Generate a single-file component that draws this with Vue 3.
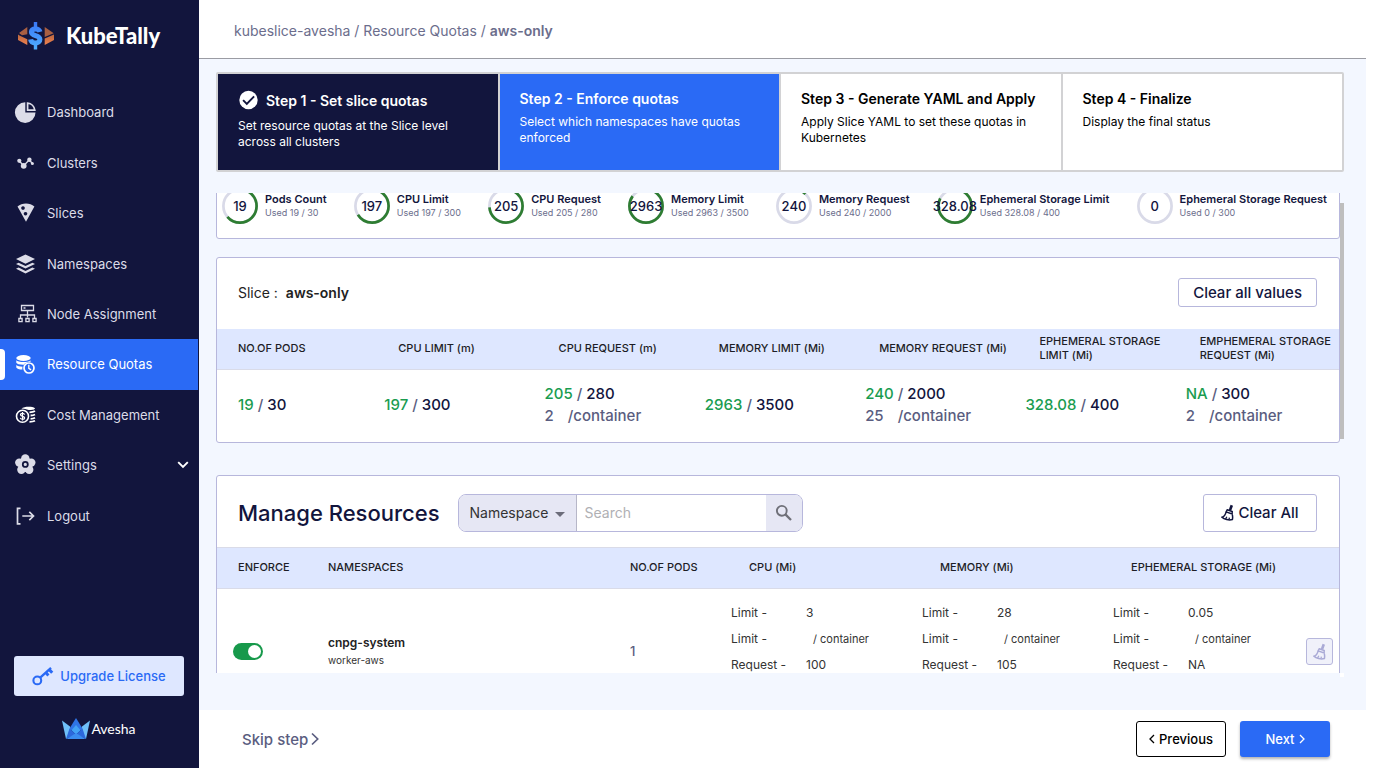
<script setup>
import { ref, onMounted } from 'vue'

const navItems = [
  { label: 'Dashboard', icon: 'dashboard' },
  { label: 'Clusters', icon: 'clusters' },
  { label: 'Slices', icon: 'slices' },
  { label: 'Namespaces', icon: 'namespaces' },
  { label: 'Node Assignment', icon: 'nodes' },
  { label: 'Resource Quotas', icon: 'quotas', active: true },
  { label: 'Cost Management', icon: 'cost' },
  { label: 'Settings', icon: 'settings', expandable: true },
  { label: 'Logout', icon: 'logout' },
]

const steps = [
  { title: 'Step 1 - Set slice quotas', text: 'Set resource quotas at the Slice level across all clusters', state: 'done' },
  { title: 'Step 2 - Enforce quotas', text: 'Select which namespaces have quotas enforced', state: 'current' },
  { title: 'Step 3 - Generate YAML and Apply', text: 'Apply Slice YAML to set these quotas in Kubernetes', state: 'todo' },
  { title: 'Step 4 - Finalize', text: 'Display the final status', state: 'todo' },
]

const usage = [
  { name: 'Pods Count', used: 19, total: 30 },
  { name: 'CPU Limit', used: 197, total: 300 },
  { name: 'CPU Request', used: 205, total: 280 },
  { name: 'Memory Limit', used: 2963, total: 3500 },
  { name: 'Memory Request', used: 240, total: 2000 },
  { name: 'Ephemeral Storage Limit', used: 328.08, total: 400 },
  { name: 'Ephemeral Storage Request', used: 0, total: 300 },
]
const radius = 16.6
const circumference = 2 * Math.PI * radius
const dash = (u) => `${(u.used / u.total) * circumference} ${circumference}`

const quotas = [
  { head: 'NO.OF PODS', used: '19', total: '30' },
  { head: 'CPU LIMIT (m)', used: '197', total: '300' },
  { head: 'CPU REQUEST (m)', used: '205', total: '280', per: '2' },
  { head: 'MEMORY LIMIT (Mi)', used: '2963', total: '3500' },
  { head: 'MEMORY REQUEST (Mi)', used: '240', total: '2000', per: '25' },
  { head: 'EPHEMERAL STORAGE LIMIT (Mi)', used: '328.08', total: '400' },
  { head: 'EMPHEMERAL STORAGE REQUEST (Mi)', used: 'NA', total: '300', per: '2' },
]

const rows = ref([
  {
    enforce: true,
    name: 'cnpg-system',
    worker: 'worker-aws',
    pods: 1,
    resources: [
      { limit: '3', request: '100' },
      { limit: '28', request: '105' },
      { limit: '0.05', request: 'NA' },
    ],
  },
])

const filterBy = ref('Namespace')
const search = ref('')
const scroller = ref(null)
onMounted(() => {
  scroller.value.scrollTop = 20
})
</script>

<template>
  <div class="app">
    <aside class="sidebar">
      <div class="brand">
        <svg width="38" height="28" viewBox="0 0 38 28" aria-hidden="true">
          <defs>
            <linearGradient id="copper" x1="0" y1="0" x2="0" y2="1">
              <stop offset="0" stop-color="#b8663f" />
              <stop offset="1" stop-color="#f08250" />
            </linearGradient>
            <linearGradient id="dollar" x1="0" y1="0" x2="0" y2="28" gradientUnits="userSpaceOnUse">
              <stop offset="0" stop-color="#3a78f6" />
              <stop offset="1" stop-color="#4fb0ff" />
            </linearGradient>
          </defs>
          <path d="M2 10.900L10.300 5v7.200L5 13.300zM27.700 5l9 6.200-9 3.700z" fill="#a85f42" />
          <path d="M1 12.600l1.500 1 7.800 3.700V23L1 18zM27.700 16.600L37 12.400V18l-9.300 5z" fill="url(#copper)" />
          <path d="M23 9.800C22.400 7.600 20.600 6.900 18.500 6.900c-2.600 0-4.100 1.200-4.100 3.200 0 4.600 8.500 2.500 8.500 7.300 0 2.300-1.900 3.500-4.400 3.500-2.600 0-4.500-1.200-4.900-3.600" fill="none" stroke="url(#dollar)" stroke-width="5" />
          <path d="M18.500 0v5M18.500 22.500v5" stroke="url(#dollar)" stroke-width="3.400" />
        </svg>
        <span>KubeTally</span>
      </div>

      <nav class="nav">
        <a v-for="item in navItems" :key="item.label" href="#" class="nav-item" :class="{ active: item.active }">
          <svg class="nav-icon" width="24" height="24" viewBox="0 0 24 24" aria-hidden="true">
            <g v-if="item.icon === 'dashboard'">
              <path d="M11.300 2.300v10.200h10.200A10.300 10.300 0 1 1 11.300 2.300z" fill="currentColor" />
              <path d="M13.600 3.200v6.900h7.200A8 8 0 0 0 13.600 3.200z" fill="none" stroke="currentColor" stroke-width="1.700" />
            </g>
            <g v-else-if="item.icon === 'clusters'" fill="currentColor">
              <path d="M5.500 10.200l4.200 4.600 5.600-6 3 3.700" fill="none" stroke="currentColor" stroke-width="1.300" />
              <circle cx="5.300" cy="9.800" r="2.100" /><circle cx="9.700" cy="14.800" r="2.900" />
              <circle cx="15.400" cy="8.700" r="2.200" /><circle cx="18.400" cy="12.600" r="1.500" />
            </g>
            <path v-else-if="item.icon === 'slices'" fill="currentColor" fill-rule="evenodd" d="M3.500 5.600C8 1.300 16 1.300 20.400 5.600L12 20.800zM9 5.200a1.800 1.800 0 1 0 .01 0zM11.500 10.900a1.800 1.800 0 1 0 .01 0z" />
            <g v-else-if="item.icon === 'namespaces'" fill="currentColor">
              <path d="M11.500 2.500L21 7.100l-9.500 4.600L2 7.100z" />
              <path d="M2 11.900l2.600-1.200 6.900 3.300 6.900-3.300 2.600 1.200-9.500 4.700z" />
              <path d="M2 16.800l2.600-1.200 6.900 3.300 6.900-3.300 2.600 1.200-9.500 4.700z" />
            </g>
            <g v-else-if="item.icon === 'nodes'" fill="none" stroke="currentColor" stroke-width="1.300">
              <path d="M7.500 3.500h12v5h-12zM9.500 6h2M13.500 8.500v7M6.500 16v-3h14v3" />
              <path d="M4.900 16.500h3.200v3.200H4.900zM11.900 16.500h3.200v3.200h-3.200zM18.900 16.500h3.200v3.200h-3.200z" />
            </g>
            <g v-else-if="item.icon === 'quotas'" fill="currentColor">
              <ellipse cx="9.500" cy="6" rx="7.200" ry="3" />
              <path d="M2.300 8.200c1.500 2 11 2.600 14.300.2v1.300c-3 0-5.600 1.400-6.900 3-3.600.1-7-.7-7.400-2zM2.300 13c1 1 3.600 1.600 6.300 1.700-.3.900-.4 1.800-.2 2.900C5.300 17.500 2.600 16.700 2.300 15.500z" />
              <circle cx="15" cy="16" r="5" fill="none" stroke="currentColor" stroke-width="1.700" />
              <path d="M14.800 12.800v3.500l2.300 1.600" fill="none" stroke="currentColor" stroke-width="1.300" />
            </g>
            <g v-else-if="item.icon === 'cost'" fill="none" stroke="#fff">
              <path d="M7.500 5.400C10 3.600 18 3.200 21 5.200c0 1.200-3 1.900-6.300 1.900-2.500-1.300-4.500-1.600-7.200-1.700z" fill="#fff" stroke="none" />
              <path d="M15.500 9.300c2.300 0 4.300-.4 5.500-1.200M16.600 12.500c1.800-.1 3.400-.5 4.400-1.100M16.600 15.800c1.800-.1 3.400-.5 4.400-1.100M15.500 18.800c2.300 0 4.400-.4 5.500-1" stroke-width="1.800" />
              <circle cx="8.500" cy="13.300" r="6" stroke-width="1.600" />
              <path d="M10.700 11.600c-.4-1-1.200-1.300-2.200-1.300-2.700 0-2.800 2.500 0 3 2.900.5 2.800 3 0 3-1.200 0-2-.5-2.300-1.400M8.500 9v8.600" stroke-width="1.200" />
            </g>
            <g v-else-if="item.icon === 'settings'" fill="currentColor">
              <circle cx="11.300" cy="5.400" r="4.200" /><circle cx="17.300" cy="9.600" r="4.200" />
              <circle cx="15.200" cy="16.700" r="4.200" /><circle cx="7.400" cy="16.700" r="4.200" />
              <circle cx="5.300" cy="9.600" r="4.200" /><circle cx="11.300" cy="11.600" r="7.400" />
              <circle cx="11.300" cy="11.400" r="2.500" fill="none" stroke="#12153d" stroke-width="1.800" />
            </g>
            <g v-else fill="none" stroke="currentColor" stroke-width="1.700">
              <path d="M6.500 4.300h-3v15.500h3M8.300 12h11M15.300 7.800l4.200 4.200-4.200 4.200" />
            </g>
          </svg>
          <span class="nav-label">{{ item.label }}</span>
          <svg v-if="item.expandable" class="chevron" width="12" height="8" viewBox="0 0 12 8" aria-hidden="true">
            <path d="M1.200 1.200L6 6l4.800-4.800" fill="none" stroke="#fff" stroke-width="1.900" />
          </svg>
        </a>
      </nav>

      <div class="sidebar-foot">
        <button class="upgrade" type="button">
          <svg width="22" height="20" viewBox="0 0 22 20" aria-hidden="true">
            <g fill="none" stroke="#2a6af5">
              <circle cx="5.300" cy="14.400" r="3.900" stroke-width="2.100" />
              <path d="M8.200 11.600L19 1.800" stroke-width="2.300" />
              <path d="M13.800 6.600l2.600 2.800M17.200 3.600l3 3.200" stroke-width="3" />
            </g>
          </svg>
          Upgrade License
        </button>
        <div class="maker">
          <svg width="28" height="22" viewBox="0 0 28 22" aria-hidden="true">
            <path d="M0 2.500l8 6L9.500 15 4 21z" fill="#6fc0fa" />
            <path d="M28 2.500l-8 6L18.500 15l5.500 6z" fill="#6fc0fa" />
            <path d="M14 0l6.500 10.500L14 16.500 7.500 10.500z" fill="#2f74e6" />
            <path d="M14 7l4.500 5.300L14 16.500l-4.500-4.200z" fill="#42a2f6" />
            <path d="M7.500 10.500l6.500 6L4 21zM20.500 10.500l-6.500 6L24 21z" fill="#2c68dc" />
            <path d="M14 15l9.500 6h-19z" fill="#3a8cf0" />
          </svg>
          <span>Avesha</span>
        </div>
      </div>
    </aside>

    <main class="main">
      <header class="topbar">
        <div class="crumbs"><a href="#">kubeslice-avesha</a> / <a href="#">Resource Quotas</a> / <strong>aws-only</strong></div>
      </header>

      <ol class="steps">
        <li v-for="step in steps" :key="step.title" class="step" :class="step.state">
          <div class="step-title">
            <svg v-if="step.state === 'done'" width="20" height="20" viewBox="0 0 20 20" aria-hidden="true">
              <circle cx="10.500" cy="10" r="9.200" fill="#fff" />
              <path d="M5.100 10.200l3.700 3.700 7.300-7.600" fill="none" stroke="#12153d" stroke-width="1.900" />
            </svg>
            {{ step.title }}
          </div>
          <p>{{ step.text }}</p>
        </li>
      </ol>

      <div class="viewport">
        <div ref="scroller" class="scroller">
          <section class="card usage">
            <div v-for="u in usage" :key="u.name" class="usage-item">
              <div class="ring">
                <svg width="36" height="36" viewBox="0 0 36 36" aria-hidden="true">
                  <circle cx="18" cy="18" :r="radius" fill="none" stroke="#d9dae8" stroke-width="2.700" />
                  <circle v-if="u.used" cx="18" cy="18" :r="radius" fill="none" stroke="#2e7d32" stroke-width="2.700" :stroke-dasharray="dash(u)" transform="rotate(-90 18 18)" />
                </svg>
                <span>{{ u.used }}</span>
              </div>
              <div class="usage-text">
                <div class="usage-name">{{ u.name }}</div>
                <div class="usage-used">Used {{ u.used }} / {{ u.total }}</div>
              </div>
            </div>
          </section>

          <section class="card slice">
            <div class="card-head">
              <div class="slice-name">Slice : <strong>aws-only</strong></div>
              <button type="button" class="outline clear-values">Clear all values</button>
            </div>
            <table class="quota-table">
              <thead>
                <tr><th v-for="q in quotas" :key="q.head" scope="col">{{ q.head }}</th></tr>
              </thead>
              <tbody>
                <tr>
                  <td v-for="q in quotas" :key="q.head">
                    <div><span class="used">{{ q.used }}</span> / <span class="total">{{ q.total }}</span></div>
                    <div v-if="q.per" class="per"><span>{{ q.per }}</span><span>/container</span></div>
                  </td>
                </tr>
              </tbody>
            </table>
          </section>

          <section class="card manage">
            <div class="card-head">
              <h2>Manage Resources</h2>
              <form class="search" @submit.prevent>
                <div class="select-wrap">
                  <select v-model="filterBy" aria-label="Search by">
                    <option>Namespace</option>
                  </select>
                  <svg width="10" height="5" viewBox="0 0 10 5" aria-hidden="true"><path d="M0 0h10L5 5z" fill="#6c6d7a" /></svg>
                </div>
                <input v-model="search" type="text" placeholder="Search" aria-label="Search" />
                <button type="submit" aria-label="Run search">
                  <svg width="18" height="18" viewBox="0 0 18 18" aria-hidden="true">
                    <circle cx="6.800" cy="6.800" r="4.900" fill="none" stroke="#6f7078" stroke-width="1.900" />
                    <path d="M10.400 10.400l5.600 5.600" stroke="#6f7078" stroke-width="2.300" />
                  </svg>
                </button>
              </form>
              <button type="button" class="outline clear-all">
                <svg width="13" height="17" viewBox="0 0 13 17" aria-hidden="true">
                  <path d="M10.800 1.200L9 6.200" stroke="#12153d" stroke-width="2.600" />
                  <path d="M6.200 5.800l5 1.700-.1 2.400-6-2zM5 8.200C4.400 11 2.800 12.800 1 13.200c2 2.200 7 3.300 10.400 2.300.4-2 .3-3.900-.3-5.600" fill="none" stroke="#12153d" stroke-width="1.500" />
                  <path d="M4.600 15l1.200-2.300M8 15.600l.4-2" stroke="#12153d" stroke-width="1.300" />
                </svg>
                Clear All
              </button>
            </div>
            <table class="resource-table">
              <colgroup>
                <col class="c-enforce" /><col /><col class="c-pods" />
                <col class="c-res" /><col class="c-res" /><col class="c-res" /><col class="c-act" />
              </colgroup>
              <thead>
                <tr>
                  <th scope="col">ENFORCE</th>
                  <th scope="col">NAMESPACES</th>
                  <th scope="col">NO.OF PODS</th>
                  <th scope="col" class="res">CPU (Mi)</th>
                  <th scope="col" class="res">MEMORY (Mi)</th>
                  <th scope="col" class="res">EPHEMERAL STORAGE (Mi)</th>
                  <th></th>
                </tr>
              </thead>
              <tbody>
                <tr v-for="row in rows" :key="row.name">
                  <td class="enforce"><input v-model="row.enforce" type="checkbox" class="toggle" :aria-label="`Enforce quotas for ${row.name}`" /></td>
                  <td>
                    <div class="ns-name">{{ row.name }}</div>
                    <div class="ns-worker">{{ row.worker }}</div>
                  </td>
                  <td class="pods">{{ row.pods }}</td>
                  <td v-for="(r, i) in row.resources" :key="i" class="detail">
                    <dl>
                      <dt>Limit -</dt><dd>{{ r.limit }}</dd>
                      <dt>Limit -</dt><dd class="container">/ container</dd>
                      <dt>Request -</dt><dd>{{ r.request }}</dd>
                    </dl>
                  </td>
                  <td class="act">
                    <button type="button" class="row-clear" aria-label="Clear row">
                      <svg width="13" height="17" viewBox="0 0 13 17" aria-hidden="true">
                        <path d="M10.800 1.200L9 6.200" stroke="#aaaad6" stroke-width="2.600" />
                        <path d="M6.200 5.800l5 1.700-.1 2.400-6-2zM5 8.200C4.400 11 2.800 12.800 1 13.200c2 2.200 7 3.300 10.400 2.300.4-2 .3-3.900-.3-5.600" fill="none" stroke="#aaaad6" stroke-width="1.500" />
                        <path d="M4.600 15l1.200-2.300M8 15.600l.4-2" stroke="#aaaad6" stroke-width="1.300" />
                      </svg>
                    </button>
                  </td>
                </tr>
              </tbody>
            </table>
          </section>
        </div>
        <div class="thumb"></div>
        <div class="corner"></div>
      </div>

      <footer class="footer">
        <button type="button" class="skip">
          Skip step
          <svg width="8" height="14" viewBox="0 0 8 14" aria-hidden="true"><path d="M1 1.500L6.700 7 1 12.500" fill="none" stroke="#5a5d80" stroke-width="1.700" /></svg>
        </button>
        <div class="footer-actions">
          <button type="button" class="prev">
            <svg width="6" height="10" viewBox="0 0 6 10" aria-hidden="true"><path d="M5 1L1 5l4 4" fill="none" stroke="#000" stroke-width="1.300" /></svg>
            Previous
          </button>
          <button type="button" class="next">
            Next
            <svg width="6" height="10" viewBox="0 0 6 10" aria-hidden="true"><path d="M1 1l4 4-4 4" fill="none" stroke="#fff" stroke-width="1.300" /></svg>
          </button>
        </div>
      </footer>
    </main>
  </div>
</template>

<style>
body {
  background: #fff;
}
</style>

<style scoped>
* {
  box-sizing: border-box;
}
.app {
  display: grid;
  grid-template-columns: 199px minmax(0, 1fr);
  height: 100vh;
  padding: 0 9px 14px 0;
  font-family: Inter, Roboto, sans-serif;
  font-size: 13px;
  color: #12153d;
}
button, input, select {
  font: inherit;
  color: inherit;
  margin: 0;
}
a {
  color: inherit;
  text-decoration: none;
}

/* sidebar */
.sidebar {
  display: flex;
  flex-direction: column;
  background: #12153d;
  color: #dcdce8;
}
.brand {
  display: flex;
  align-items: center;
  gap: 11px;
  height: 72px;
  padding-left: 17px;
  font: 900 22px/24px Lato, sans-serif;
  color: #fff;
}
.nav {
  display: flex;
  flex-direction: column;
  height: 454px;
  margin: 15px 1px 0 0;
}
.nav-item {
  display: flex;
  flex: 1;
  align-items: center;
  gap: 9px;
  padding: 0 9px 0 14px;
}
.nav-item.active {
  position: relative;
  background: #2a6af5;
  color: #fff;
}
.nav-item.active::before {
  content: '';
  position: absolute;
  left: 0;
  top: 10px;
  bottom: 10px;
  width: 5px;
  border-radius: 0 4px 4px 0;
  background: #fff;
}
.nav-label {
  flex: 1;
}
.sidebar-foot {
  margin-top: auto;
  padding: 0 15px 28px 14px;
}
.upgrade {
  display: flex;
  align-items: center;
  justify-content: center;
  gap: 6px;
  width: 100%;
  height: 40px;
  border: 0;
  border-radius: 3px;
  background: #dee7ff;
  color: #2a6af5;
  font-weight: 500;
}
.maker {
  display: flex;
  align-items: center;
  justify-content: center;
  gap: 1px;
  margin-top: 22px;
  font: 400 14px/22px Lato, sans-serif;
  color: #fff;
}

/* main column */
.main {
  display: flex;
  flex-direction: column;
  min-width: 0;
  min-height: 0;
  background: #f3f7ff;
}
.topbar {
  display: flex;
  align-items: center;
  height: 59px;
  padding: 3px 35px 0;
  border-bottom: 1px solid #9b9ca3;
  background: #fff;
  color: #6b6d8c;
  font-size: 14px;
}
.crumbs strong {
  font-weight: 600;
}
.steps {
  display: grid;
  grid-template-columns: repeat(4, minmax(0, 1fr));
  gap: 2px;
  margin: 13px 22px 0 17px;
  padding: 2px;
  list-style: none;
  border-radius: 2px;
  background: #d2d2d4;
}
.step {
  min-height: 96px;
  padding: 13px 20px;
  background: #fff;
  color: #000;
}
.step.done {
  background: #12153d;
  color: #fff;
}
.step.current {
  background: #2a6af5;
  color: #fff;
}
.step-title {
  display: flex;
  align-items: center;
  gap: 8px;
  min-height: 22px;
  font-size: 14px;
  font-weight: 600;
}
.done .step-title {
  min-height: 26px;
}
.step p {
  margin: 5px 0 0;
  font-size: 12px;
  line-height: 16px;
}

.viewport {
  position: relative;
  flex: 1;
  min-height: 0;
  margin: 21px 22px 37px 17px;
}
.scroller {
  height: 100%;
  padding-right: 4px;
  overflow: hidden;
}
.thumb {
  position: absolute;
  top: 10px;
  right: 0;
  width: 4px;
  height: 236px;
  background: #bebebe;
}
.corner {
  position: absolute;
  right: 0;
  bottom: -4px;
  width: 4px;
  height: 4px;
  background: #fff;
}
.card {
  border: 1px solid #b7b7dc;
  border-radius: 3px;
  background: #fff;
}

.usage {
  display: flex;
  justify-content: space-between;
  padding: 14px 12px 14px 5px;
}
.usage-item {
  display: flex;
  gap: 7px;
}
.ring {
  display: grid;
  grid-template-columns: 36px;
  place-items: center;
  width: 36px;
  height: 36px;
}
.ring > * {
  grid-area: 1 / 1;
}
.ring span {
  font-weight: 500;
}
.usage-text {
  padding-top: 4px;
  white-space: nowrap;
}
.usage-name {
  font-size: 11px;
  font-weight: 600;
  line-height: 14px;
}
.usage-used {
  font-size: 9px;
  line-height: 14px;
  color: #6b6d8c;
}

.slice {
  margin-top: 18px;
}
.card-head {
  display: flex;
  align-items: center;
  justify-content: space-between;
  height: 71px;
  padding: 0 22px 2px 21px;
}
.slice-name {
  font-size: 14px;
  color: #222;
}
.slice-name strong {
  margin-left: 4px;
  font-weight: 600;
}
.outline {
  border: 1px solid #b7b7dc;
  border-radius: 3px;
  background: #fff;
  font-size: 15px;
  font-weight: 500;
}
.clear-values {
  height: 29px;
  padding: 0 14px;
}
table {
  width: 100%;
  table-layout: fixed;
  border-collapse: separate;
  border-spacing: 0;
}
th {
  height: 41px;
  padding: 0 0 2px 21px;
  border-bottom: 1px solid #d9dbe8;
  background: #dee7ff;
  font-size: 11px;
  font-weight: 500;
  line-height: 14px;
  text-align: left;
  color: #1d1d26;
}
td {
  padding: 0 0 0 21px;
}
.quota-table td {
  height: 72px;
  padding: 0 0 2px 7px;
  font-size: 15px;
  font-weight: 500;
  line-height: 22px;
  color: #5a5d80;
}
.quota-table td:first-child {
  padding-left: 21px;
}
.used {
  color: #1a9c50;
}
.total {
  color: #12153d;
}
.per {
  display: flex;
  gap: 14px;
}

.manage {
  min-height: 600px;
  margin-top: 32px;
}
.resource-table {
  border-top: 1px solid #d9dbe8;
}
h2 {
  margin: 5px 18px 0 0;
  font-size: 22px;
  font-weight: 500;
  line-height: 28px;
}
.search {
  display: flex;
  width: 345px;
  height: 38px;
  margin: 4px auto 0 0;
  overflow: hidden;
  border: 1px solid #b7b7dc;
  border-radius: 8px;
}
.select-wrap {
  position: relative;
  width: 118px;
  border-right: 1px solid #b7b7c8;
}
.select-wrap select {
  width: 100%;
  height: 100%;
  padding: 0 11px;
  appearance: none;
  border: 0;
  border-radius: 0;
  background: #e6e7f4;
  color: #333;
  font-size: 14px;
}
.select-wrap svg {
  position: absolute;
  top: 17px;
  right: 11px;
  pointer-events: none;
}
.search input {
  flex: 1;
  min-width: 0;
  padding: 0 8px;
  border: 0;
  outline: 0;
  font-size: 14px;
}
.search input::placeholder {
  color: #b0b0b4;
}
.search button {
  display: grid;
  place-items: center;
  width: 36px;
  padding: 0;
  border: 0;
  background: #e6e7f4;
}
.clear-all {
  display: flex;
  align-items: center;
  justify-content: center;
  gap: 4px;
  width: 114px;
  height: 38px;
  margin-top: 4px;
}

.c-enforce { width: 90px; }
.c-pods { width: 101px; }
.c-res { width: 191px; }
.c-act { width: 56px; }
th.res {
  padding-left: 39px;
}
.resource-table td {
  height: 124px;
}
.resource-table td.enforce {
  padding-left: 16px;
}
.toggle {
  display: block;
  width: 30px;
  height: 17px;
  padding: 2px;
  appearance: none;
  border-radius: 9px;
  background: #9a9bb0;
}
.toggle::before {
  content: '';
  display: block;
  width: 13px;
  height: 13px;
  border-radius: 50%;
  background: #fff;
}
.toggle:checked {
  background: #17994b;
}
.toggle:checked::before {
  margin-left: 13px;
}
.ns-name {
  font-size: 12px;
  font-weight: 600;
  line-height: 18px;
  color: #222;
}
.ns-worker {
  font-size: 10px;
  line-height: 16px;
  color: #333;
}
.pods {
  font-weight: 500;
  color: #5a5d80;
}
.resource-table td.detail {
  padding-top: 11px;
  vertical-align: top;
}
dl {
  display: grid;
  grid-template-columns: 75px 1fr;
  margin: 0;
  font-size: 12px;
  line-height: 26px;
  color: #333;
}
dd {
  margin: 0;
}
dd.container {
  padding-left: 7px;
  font-size: 11px;
}
.resource-table td.act {
  padding: 0 6px 0 0;
}
.row-clear {
  display: grid;
  place-items: center;
  width: 27px;
  height: 27px;
  margin-left: auto;
  padding: 0;
  border: 1px solid #b7b7dc;
  border-radius: 3px;
  background: #f0f1fa;
}

/* footer */
.footer {
  display: flex;
  align-items: center;
  justify-content: space-between;
  height: 58px;
  padding: 0 36px 0 43px;
  background: #fff;
}
.skip {
  display: flex;
  align-items: center;
  gap: 3px;
  padding: 0;
  border: 0;
  background: none;
  color: #5a5d80;
  font-size: 15px;
  font-weight: 500;
}
.footer-actions {
  display: flex;
  gap: 14px;
}
.prev, .next {
  display: flex;
  align-items: center;
  justify-content: center;
  gap: 4px;
  width: 90px;
  height: 36px;
  padding: 0;
  border-radius: 3px;
  font-size: 13px;
  font-weight: 500;
}
.prev {
  border: 1px solid #000;
  background: #fff;
  color: #000;
}
.next {
  border: 0;
  background: #2a6af5;
  color: #fff;
  box-shadow: 0 2px 3px rgba(0, 0, 0, 0.3);
}
</style>
